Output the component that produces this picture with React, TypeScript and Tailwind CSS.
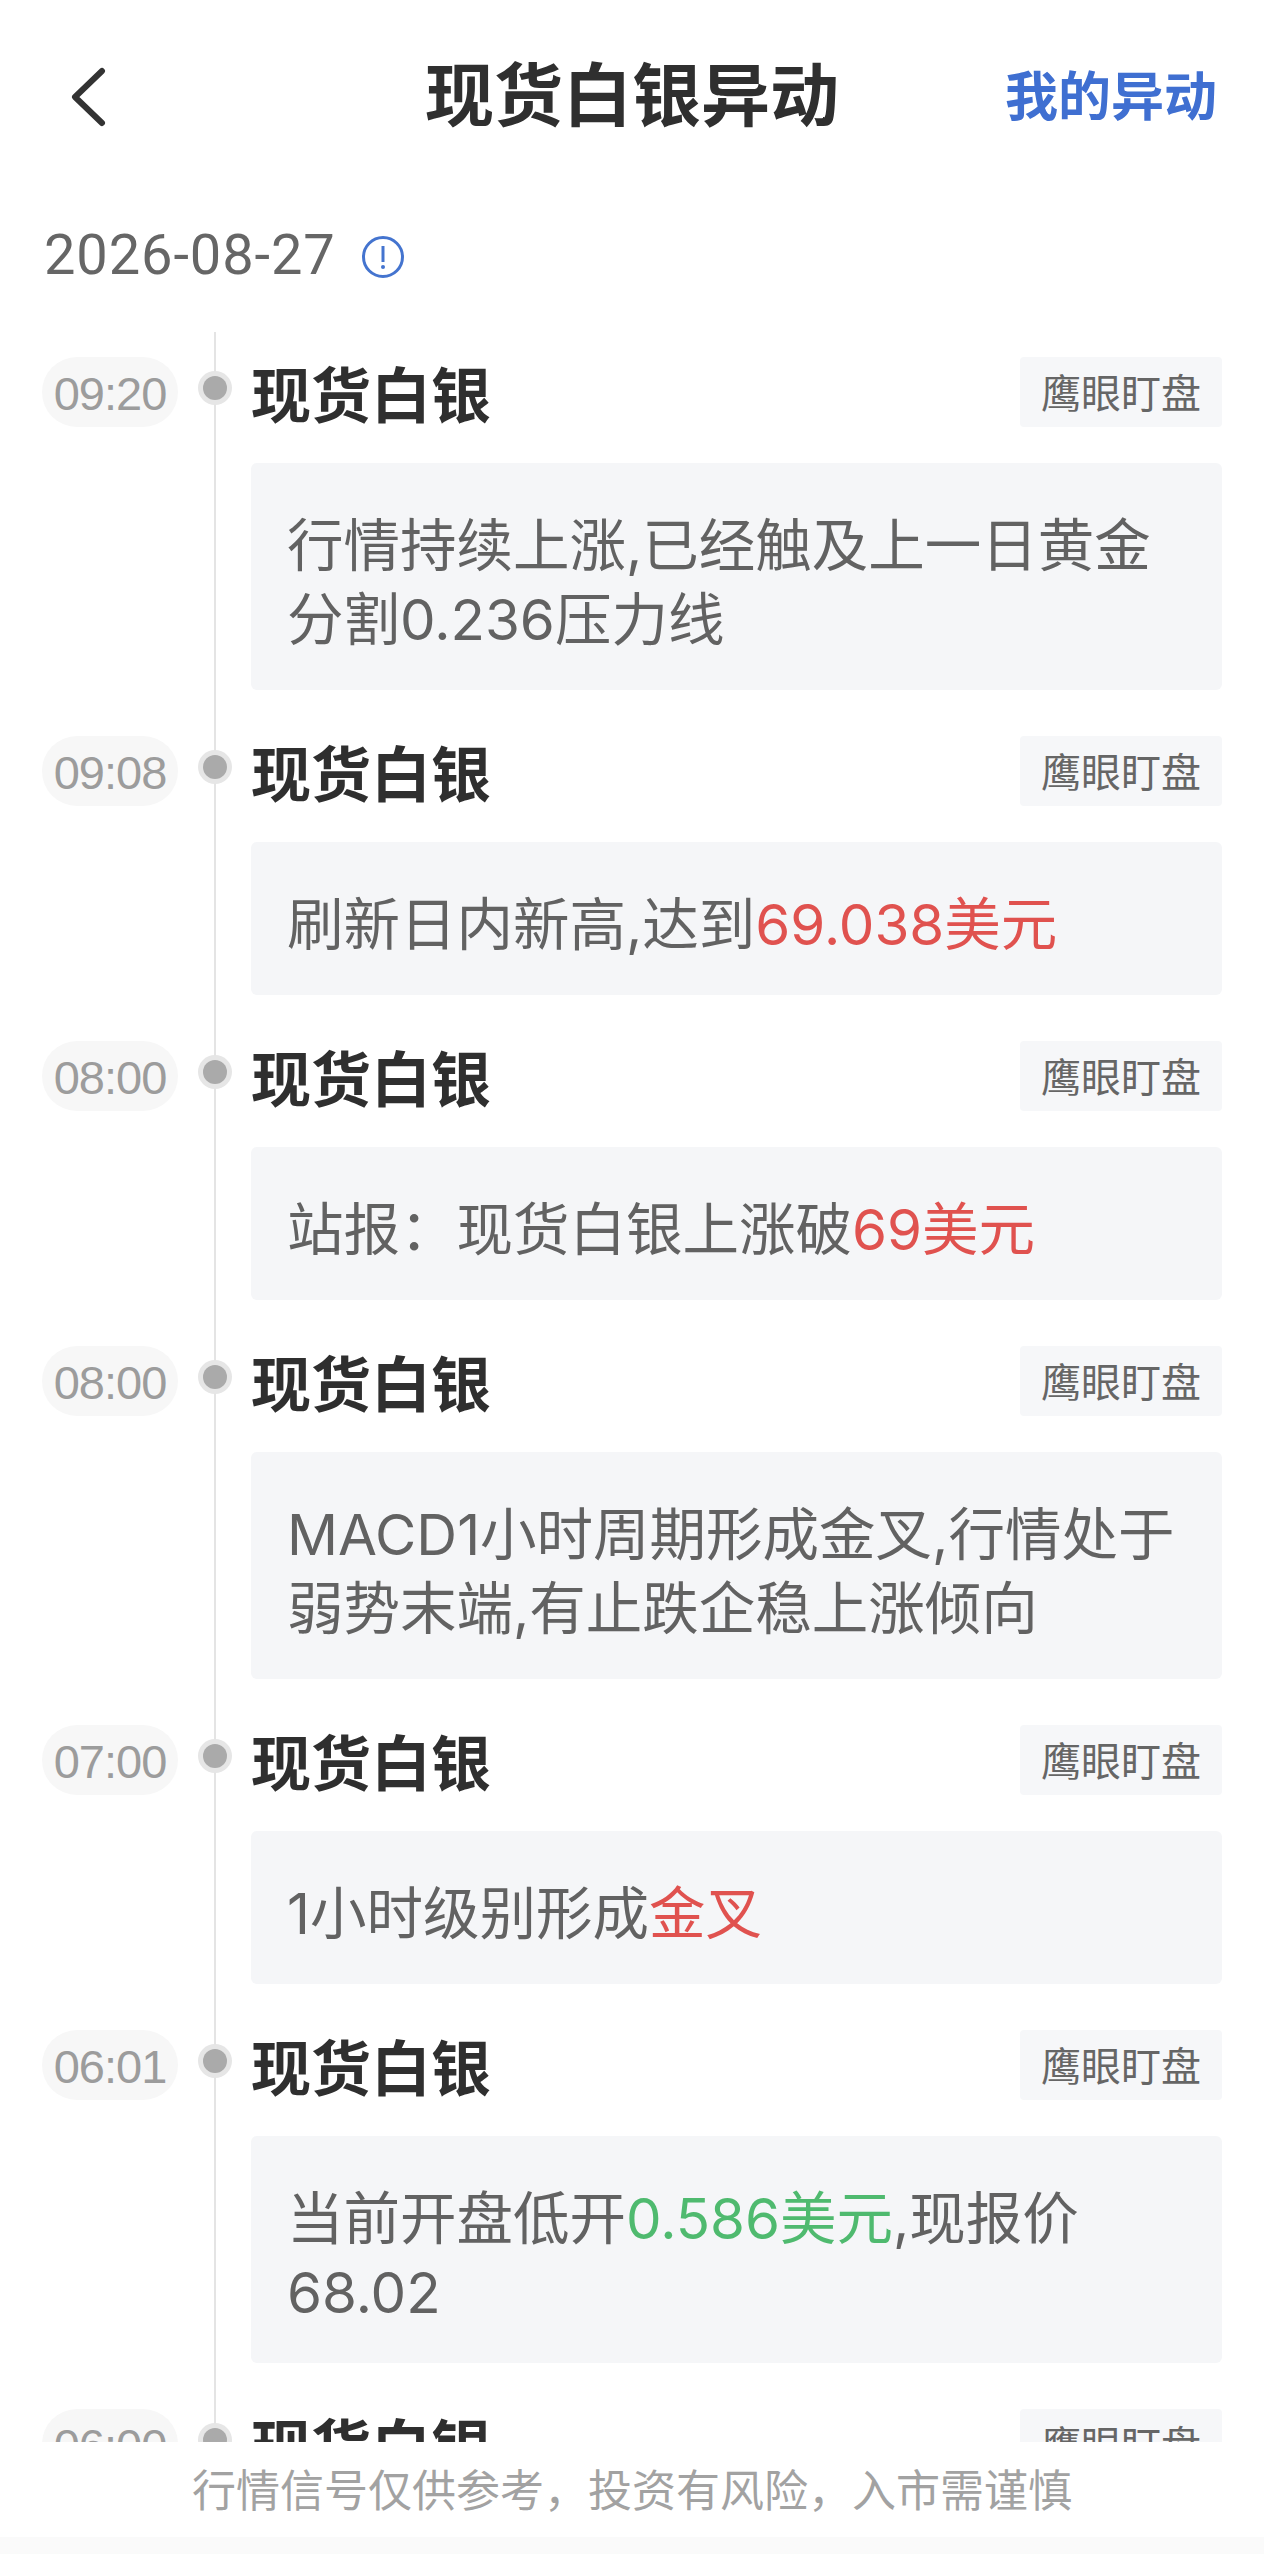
import React from "react";

const cjk = "font-['Liberation_Sans','Noto_Sans_CJK_SC',sans-serif]";
const bodyFont = "font-['Inter','Noto_Sans_CJK_SC',sans-serif]";

type Item = { time: string; body: React.ReactNode };

const Red = ({ children }: { children: React.ReactNode }) => (
  <span className="text-[#e0524f]">{children}</span>
);

const items: Item[] = [
  {
    time: "09:20",
    body: (
      <>
        行情持续上涨,已经触及上一日黄金
        <br />
        分割0.236压力线
      </>
    ),
  },
  {
    time: "09:08",
    body: (
      <>
        刷新日内新高,达到<Red>69.038美元</Red>
      </>
    ),
  },
  {
    time: "08:00",
    body: (
      <>
        站报：现货白银上涨破<Red>69美元</Red>
      </>
    ),
  },
  {
    time: "08:00",
    body: (
      <>
        MACD1小时周期形成金叉,行情处于
        <br />
        弱势末端,有止跌企稳上涨倾向
      </>
    ),
  },
  {
    time: "07:00",
    body: (
      <>
        1小时级别形成<Red>金叉</Red>
      </>
    ),
  },
  {
    time: "06:01",
    body: (
      <>
        当前开盘低开<span className="text-[#4fba6f]">0.586美元</span>,现报价
        <br />
        68.02
      </>
    ),
  },
  { time: "06:00", body: "现货白银上涨" },
];

function Row({ item }: { item: Item }) {
  return (
    <div className="flex pl-[42px] pr-[42px]">
      <div className="flex h-[70px] w-[136px] shrink-0 items-center justify-center rounded-full bg-[#f7f7f7] pt-[4px] font-['Liberation_Sans',sans-serif] text-[47px] tracking-[-1px] text-[#9c9c9c]">
        {item.time}
      </div>
      <div className="relative ml-[20px] mt-[14px] flex h-[34px] w-[34px] shrink-0 items-center justify-center rounded-full bg-[#e6e6e6]">
        <div className="h-[24px] w-[24px] rounded-full bg-[#aaaaaa]" />
      </div>
      <div className="ml-[19px] min-w-0 flex-1">
        <div className="flex h-[70px] items-center justify-between">
          <span className={`${cjk} pt-[12px] text-[60px] font-bold leading-none text-[#2f2f2f]`}>
            现货白银
          </span>
          <span className={`${cjk} flex h-[70px] w-[202px] items-center justify-center rounded-[4px] bg-[#f6f7f9] pt-[3px] text-[40px] text-[#666666]`}>
            鹰眼盯盘
          </span>
        </div>
        <div className={`${bodyFont} mb-[46px] mt-[36px] rounded-[6px] bg-[#f5f6f8] pb-[33px] pl-[36px] pr-[20px] pt-[46px] text-[56.5px] leading-[74px] text-[#626262]`}>
          {item.body}
        </div>
      </div>
    </div>
  );
}

export default function App() {
  return (
    <div className="flex h-[2554px] w-[1264px] flex-col overflow-hidden bg-white">
      <header className="grid h-[195px] shrink-0 grid-cols-[1fr_auto_1fr] items-center px-[47px]">
        <svg width="36" height="60" viewBox="0 0 36 60" fill="none" className="-mt-[2px] ml-[23px]">
          <path
            d="M32 4 L5 30 L32 56"
            stroke="#333333"
            strokeWidth="6"
            strokeLinecap="round"
            strokeLinejoin="round"
          />
        </svg>
        <h1 className={`${cjk} text-[69px] font-bold text-[#2f2f2f]`}>现货白银异动</h1>
        <a className={`${cjk} justify-self-end text-[53px] font-bold text-[#3f6fd1]`}>我的异动</a>
      </header>

      <div className="flex h-[137px] shrink-0 items-start pl-[44px] pt-[24px]">
        <span className="font-['Roboto',sans-serif] text-[56px] leading-[72px] tracking-[0.9px] text-[#666666]">
          2026-08-27
        </span>
        <svg width="44" height="44" viewBox="0 0 44 44" fill="none" className="ml-[25px] mt-[16px]">
          <circle cx="22" cy="22" r="19.5" stroke="#4474cf" strokeWidth="3" />
          <path d="M22 11 V27" stroke="#4474cf" strokeWidth="3" />
          <circle cx="22" cy="32" r="2" fill="#4474cf" />
        </svg>
      </div>

      <main className="relative min-h-0 flex-1 overflow-hidden pt-[25px]">
        <div className="absolute bottom-0 left-[214px] top-0 w-[2px] bg-[#e4e4e4]" />
        <div className="relative">
          {items.map((item, i) => (
            <Row key={i} item={item} />
          ))}
        </div>
      </main>

      <footer className="flex h-[112px] shrink-0 flex-col bg-white">
        <div className={`${cjk} flex flex-1 items-center justify-center pt-[4px] text-[44px] text-[#a2a2a2]`}>
          行情信号仅供参考，投资有风险，入市需谨慎
        </div>
        <div className="h-[17px] bg-[#fafafa]" />
      </footer>
    </div>
  );
}
